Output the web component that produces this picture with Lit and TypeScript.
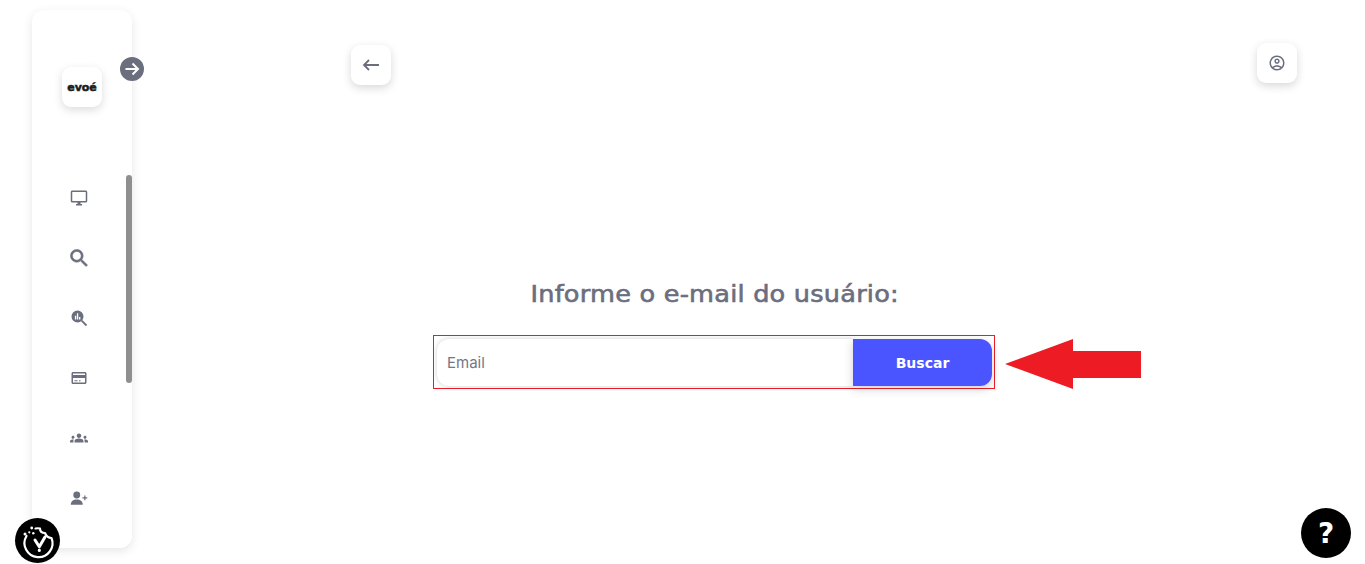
import { LitElement, html, css, svg } from "lit";
import { customElement } from "lit/decorators.js";

const navIcons = [
  { box: "0 0 24 24", body: svg`<path d="M21 2H3c-1.1 0-2 .9-2 2v12c0 1.1.9 2 2 2h7v2H8v2h8v-2h-2v-2h7c1.1 0 2-.9 2-2V4c0-1.1-.9-2-2-2zm0 14H3V4h18v12z"/>` },
  { box: "2.500 2.500 18.500 18.500", body: svg`<path d="M15.500 14h-.79l-.28-.27C15.410 12.590 16 11.110 16 9.500 16 5.910 13.090 3 9.500 3S3 5.910 3 9.500 5.910 16 9.500 16c1.610 0 3.090-.59 4.230-1.570l.27.28v.79l5 4.990L20.490 19l-4.990-5zm-6 0C7.010 14 5 11.990 5 9.500S7.010 5 9.500 5 14 7.010 14 9.500 11.990 14 9.500 14z" stroke="currentColor" stroke-width=".6"/>` },
  { box: "0 0 24 24", body: svg`<path fill-rule="evenodd" d="M10 2a8 8 0 1 1 0 16 8 8 0 0 1 0-16zM6.500 9v5h1.800V9zM9.200 5.500V14H11V5.500zM12 10.500V14h1.800v-3.500z"/><path d="M15.500 15.500 22 22" stroke="currentColor" stroke-width="2.400" fill="none"/>` },
  { box: "0 0 24 24", body: svg`<path d="M20 4H4c-1.110 0-1.990.89-1.990 2L2 18c0 1.110.89 2 2 2h16c1.110 0 2-.89 2-2V6c0-1.110-.89-2-2-2zm0 14H4v-6h16v6zm0-10H4V6h16v2z"/><path d="M6 15h4v1.400H6zM12 15h2v1.400h-2z"/>` },
  { box: "0 0 24 24", body: svg`<path d="M12 12.750c1.630 0 3.070.39 4.240.9 1.080.48 1.760 1.560 1.760 2.730V18H6v-1.610c0-1.180.68-2.260 1.760-2.730 1.170-.52 2.610-.91 4.240-.91zM4 13c1.100 0 2-.9 2-2s-.9-2-2-2-2 .9-2 2 .9 2 2 2zm1.130 1.100C4.760 14.040 4.390 14 4 14c-.99 0-1.930.21-2.780.58C.48 14.900 0 15.620 0 16.430V18h4.500v-1.610c0-.83.23-1.610.63-2.290zM20 13c1.100 0 2-.9 2-2s-.9-2-2-2-2 .9-2 2 .9 2 2 2zm4 3.430c0-.81-.48-1.530-1.220-1.850C21.930 14.210 20.990 14 20 14c-.39 0-.76.04-1.130.1.4.68.63 1.460.63 2.290V18H24v-1.570zM12 6c1.660 0 3 1.340 3 3s-1.340 3-3 3-3-1.340-3-3 1.340-3 3-3z"/>` },
  { box: "0 0 24 24", body: svg`<circle cx="9" cy="8" r="4.600"/><path d="M1 21c0-4.500 3.500-7 8-7s8 2.500 8 7z"/><path d="M19 8.500h1.600V11H23v1.600h-2.400V15H19v-2.400h-2.400V11H19z"/>` },
];

@customElement("app-root")
export class AppRoot extends LitElement {
  static styles = css`
    :host {
      display: flex;
      position: relative;
      height: 564px;
      overflow: hidden;
      background: #fff;
      font-family: "Inter", "Liberation Sans", sans-serif;
      color: #6b6e7d;
    }
    .sidebar {
      position: relative;
      flex: none;
      display: flex;
      width: 100px;
      height: 538px;
      margin: 10px 0 0 32px;
      border-radius: 12px;
      background: #fff;
      box-shadow: 0 3px 10px rgba(60, 60, 80, 0.13);
    }
    .nav {
      flex: 1;
      display: flex;
      flex-direction: column;
      align-items: center;
      padding-top: 57px;
    }
    .logo {
      width: 40px;
      height: 40px;
      margin-left: 6px;
      border-radius: 9px;
      background: #fff;
      box-shadow: 0 3px 8px rgba(60, 60, 80, 0.18);
      display: flex;
      align-items: center;
      justify-content: center;
      font-family: "DejaVu Sans", sans-serif;
      font-weight: 700;
      font-size: 11px;
      color: #1c1c1c;
      -webkit-text-stroke: 0.5px #1c1c1c;
    }
    .items {
      display: flex;
      flex-direction: column;
      gap: 42px;
      margin-top: 82px;
    }
    .items svg {
      display: block;
      width: 18px;
      height: 18px;
      fill: currentColor;
      color: #6b6e7d;
    }
    .thumb {
      flex: none;
      width: 6px;
      height: 208px;
      margin-top: 165px;
      border-radius: 3px;
      background: #8f8f8f;
    }
    .toggle {
      position: absolute;
      left: 88px;
      top: 47px;
      width: 24px;
      height: 24px;
      border-radius: 50%;
      background: #6b6e7d;
      display: flex;
      align-items: center;
      justify-content: center;
    }
    .main {
      flex: 1;
      min-width: 0;
      display: flex;
      flex-direction: column;
      padding: 43px 68px 0 219px;
    }
    .topbar {
      display: flex;
      justify-content: space-between;
      align-items: flex-start;
    }
    .tool {
      width: 40px;
      height: 40px;
      border-radius: 9px;
      background: #fff;
      box-shadow: 0 3px 8px rgba(60, 60, 80, 0.2);
      display: flex;
      align-items: center;
      justify-content: center;
    }
    .tool.back {
      margin-top: 2px;
    }
    .center {
      width: 562px;
      margin: 194px 0 0 82px;
      display: flex;
      flex-direction: column;
      align-items: center;
    }
    h1 {
      margin: 0;
      font-family: "DejaVu Sans", sans-serif;
      font-weight: 500;
      font-size: 23px;
      line-height: 30px;
      letter-spacing: 0.2px;
      color: #6b6e7d;
      white-space: nowrap;
      -webkit-text-stroke: 0.6px #6b6e7d;
      transform: translateX(1px) scaleX(1.112);
    }
    .form {
      position: relative;
      box-sizing: border-box;
      width: 562px;
      height: 54px;
      margin-top: 26px;
      padding: 3px 2px 2px 3px;
      border: 1px solid #ed1c24;
      display: flex;
    }
    .email {
      flex: 1;
      min-width: 0;
      display: flex;
      align-items: center;
      padding-left: 10px;
      height: 47px;
      box-sizing: border-box;
      border-radius: 12px 0 0 12px;
      box-shadow: 0 0 4px rgba(60, 60, 80, 0.25);
      font-family: "Inter", sans-serif;
      font-size: 15px;
      color: #73768a;
    }
    .buscar {
      flex: none;
      width: 139px;
      height: 47px;
      border-radius: 0 12px 12px 0;
      background: #4a55ff;
      box-shadow: 0 3px 8px rgba(60, 60, 80, 0.25);
      display: flex;
      align-items: center;
      justify-content: center;
      font-family: "DejaVu Sans", sans-serif;
      font-weight: 700;
      font-size: 14px;
      color: #fff;
    }
    .pointer {
      position: absolute;
      left: 570px;
      top: 3px;
    }
    .cookie,
    .help {
      position: absolute;
      border-radius: 50%;
      background: #000;
      display: flex;
      align-items: center;
      justify-content: center;
    }
    .cookie {
      left: 15px;
      top: 518px;
      width: 45px;
      height: 45px;
    }
    .help {
      left: 1301px;
      top: 508px;
      width: 50px;
      height: 50px;
      color: #fff;
      font-family: "DejaVu Sans", sans-serif;
      font-weight: 700;
      font-size: 28px;
    }
  `;

  render() {
    return html`
      <aside class="sidebar">
        <div class="nav">
          <div class="logo">evoé</div>
          <div class="items">
            ${navIcons.map((i) => html`<svg viewBox=${i.box}>${i.body}</svg>`)}
          </div>
        </div>
        <div class="thumb"></div>
        <div class="toggle">
          <svg width="16" height="16" viewBox="0 0 16 16" fill="none" stroke="#fff" stroke-width="2">
            <path d="M1.500 8H14M8.500 2.500 14 8l-5.500 5.500" />
          </svg>
        </div>
      </aside>
      <main class="main">
        <div class="topbar">
          <div class="tool back">
            <svg width="18" height="12" viewBox="0 0 18 12" fill="none" stroke="#6b6e7d" stroke-width="1.800">
              <path d="M17 6H2M7 1 2 6l5 5" />
            </svg>
          </div>
          <div class="tool">
            <svg width="18" height="18" viewBox="0 0 24 24" fill="#6b6e7d">
              <path d="M12 2C6.480 2 2 6.480 2 12s4.480 10 10 10 10-4.480 10-10S17.520 2 12 2zM7.350 18.500C8.660 17.560 10.260 17 12 17s3.340.56 4.650 1.500C15.340 19.440 13.740 20 12 20s-3.340-.56-4.650-1.500zm10.790-1.380C16.450 15.800 14.320 15 12 15s-4.450.8-6.140 2.120C4.700 15.730 4 13.950 4 12c0-4.420 3.580-8 8-8s8 3.580 8 8c0 1.950-.7 3.730-1.860 5.120z"/>
              <path d="M12 6c-1.930 0-3.500 1.570-3.500 3.500S10.070 13 12 13s3.500-1.570 3.500-3.500S13.930 6 12 6zm0 5c-.83 0-1.500-.67-1.500-1.500S11.170 8 12 8s1.500.67 1.500 1.500S12.830 11 12 11z"/>
            </svg>
          </div>
        </div>
        <section class="center">
          <h1>Informe o e-mail do usuário:</h1>
          <div class="form">
            <div class="email">Email</div>
            <div class="buscar">Buscar</div>
            <svg class="pointer" width="138" height="50" viewBox="0 0 138 50">
              <path d="M1 25 69 0v12h68v27H69v11z" fill="#ed1c24" />
            </svg>
          </div>
        </section>
      </main>
      <div class="cookie">
        <svg width="45" height="45" viewBox="0 0 45 45" fill="none" stroke="#fff" stroke-width="2.200" stroke-linecap="round" stroke-linejoin="round">
          <path d="M11.500 18A14 14 0 1 0 36.500 20Q32 20 30 15 25 15 25 10.500 23 10 20.500 10.500" />
          <path d="M20 22 24.300 28.700 30 19" stroke-width="3" />
          <path d="M24.300 32v.4" stroke-width="3" />
          <circle cx="16.700" cy="10" r="1.400" fill="#fff" stroke="none" />
          <circle cx="14.300" cy="14.300" r="1.100" fill="#fff" stroke="none" />
          <circle cx="10" cy="16" r="1.500" fill="#fff" stroke="none" />
          <circle cx="18.300" cy="15.300" r="1.200" fill="#fff" stroke="none" />
        </svg>
      </div>
      <div class="help">?</div>
    `;
  }
}
